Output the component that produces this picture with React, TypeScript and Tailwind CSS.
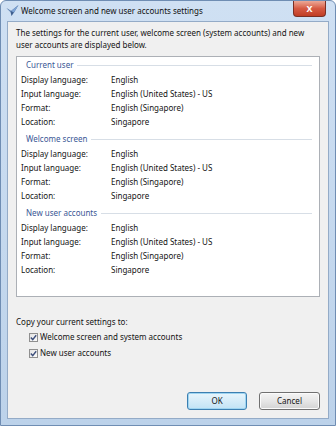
import { Fragment } from 'react';

const sections = [
  { title: 'Current user' },
  { title: 'Welcome screen' },
  { title: 'New user accounts' },
];

const rows = [
  ['Display language:', 'English'],
  ['Input language:', 'English (United States) - US'],
  ['Format:', 'English (Singapore)'],
  ['Location:', 'Singapore'],
];

function CheckBox() {
  return (
    <span className="w-[9px] h-[9px] border border-[#8f8f8f] bg-gradient-to-br from-[#e4e4e4] to-[#fbfbfb] flex items-center justify-center">
      <svg width="7" height="7" viewBox="0 0 7 7">
        <path d="M0.8 3.6 L2.7 5.6 L6.2 1.2" fill="none" stroke="#3d4f7c" strokeWidth="1.4" />
      </svg>
    </span>
  );
}

export default function App() {
  return (
    <div
      className="w-[336px] h-[426px] flex flex-col bg-gradient-to-b from-[#cfe0f3] to-[#bcd2ea] border border-[#6f8db3] rounded-t-[6px] text-[8px] text-[#141414]"
      style={{ fontFamily: '"Noto Sans", "Open Sans", sans-serif' }}
    >
      {/* Title bar */}
      <div className="h-[20px] flex items-start">
        <div className="flex items-center h-[19px] pl-[5px]">
          <svg width="13" height="13" viewBox="0 0 13 13">
            <path d="M0.5 4 L5 7 L12.5 1 L8 8.5 L5.5 12 L4.5 8 Z" fill="#3f5f8f" />
            <path d="M5 7 L12.5 1 L8 8.5 Z" fill="#7fa5d6" />
            <path d="M0.5 4 L5 7 L4.5 8 Z" fill="#6c8fbf" />
          </svg>
          <span className="ml-[2px] text-[#101010]">Welcome screen and new user accounts settings</span>
        </div>
        <div className="flex-1" />
        <div className="mr-[9px] w-[33px] h-[16px] rounded-b-[4px] border border-t-0 border-[#7a2f24] bg-gradient-to-b from-[#eba897] via-[#d65a43] to-[#c03d24] flex items-center justify-center">
          <span className="text-white font-bold text-[9px] leading-none">X</span>
        </div>
      </div>

      {/* Client area */}
      <div className="flex-1 mx-[6px] mb-[6px] border border-[#94abc7] bg-[#f0f0f0] flex flex-col">
        <p className="pl-[8px] pt-[5px] leading-[12px]">
          The settings for the current user, welcome screen (system accounts) and new
          <br />
          user accounts are displayed below.
        </p>

        <div className="mt-[5px] ml-[8px] w-[304px] h-[241px] border border-[#acb0b6] bg-white pt-[1px] pl-[4px] pr-[7px]">
          {sections.map((s) => (
            <div key={s.title} className="mb-[3px]">
              <div className="h-[14px] mb-[1px] flex items-center pl-[5px]">
                <span className="text-[#3a5795]">{s.title}</span>
                <span className="flex-1 h-px ml-[4px] bg-[#d7dee6]" />
              </div>
              {rows.map(([label, value]) => (
                <Fragment key={label}>
                  <div className="h-[14px] flex items-center">
                    <span className="w-[90px]">{label}</span>
                    <span>{value}</span>
                  </div>
                </Fragment>
              ))}
            </div>
          ))}
        </div>

        <div className="mt-[18px] pl-[8px] h-[14px] flex items-center">Copy your current settings to:</div>
        <div className="h-[16px] flex items-center ml-[21px] gap-[2px]">
          <CheckBox />
          <span>Welcome screen and system accounts</span>
        </div>
        <div className="h-[16px] flex items-center ml-[21px] gap-[2px]">
          <CheckBox />
          <span>New user accounts</span>
        </div>

        <div className="mt-[31px] flex justify-end gap-[12px] pr-[8px]">
          <button className="w-[60px] h-[18px] rounded-[3px] border border-[#3c7fb1] bg-gradient-to-b from-[#e8f5fc] to-[#c2e3f5] shadow-[inset_0_0_0_1px_#9fd5f1] text-[8px] text-[#141414]">
            OK
          </button>
          <button className="w-[61px] h-[18px] rounded-[3px] border border-[#707070] bg-gradient-to-b from-[#f4f4f4] via-[#e6e6e6] to-[#d3d3d3] shadow-[inset_0_0_0_1px_#fbfbfb] text-[8px] text-[#141414]">
            Cancel
          </button>
        </div>
      </div>
    </div>
  );
}
